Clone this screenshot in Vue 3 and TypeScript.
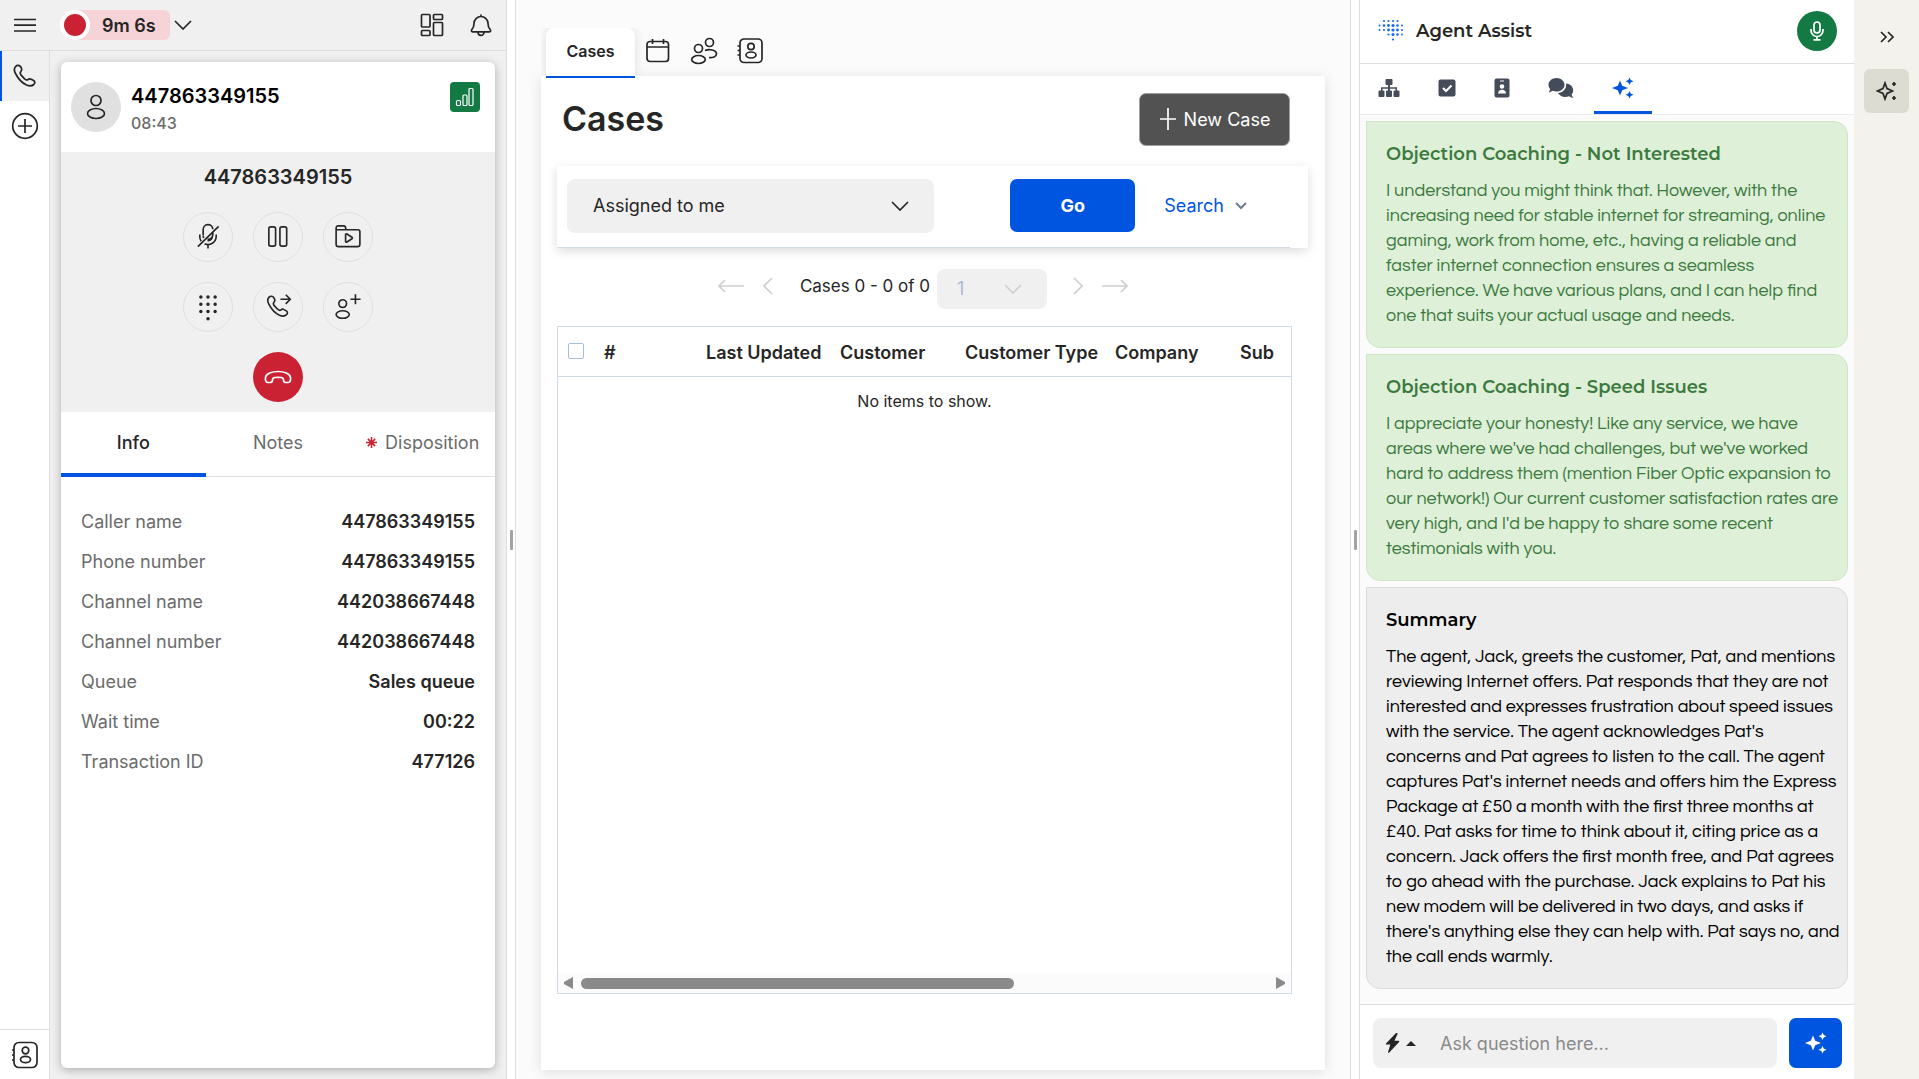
<script setup lang="ts">
import { ref } from 'vue'

interface Detail {
  label: string
  value: string
}

interface CallAction {
  name: string
  path: string
  filled?: boolean
}

interface AssistCard {
  title: string
  tone: 'coach' | 'summary'
  body: string
}

const details: Detail[] = [
  { label: 'Caller name', value: '447863349155' },
  { label: 'Phone number', value: '447863349155' },
  { label: 'Channel name', value: '442038667448' },
  { label: 'Channel number', value: '442038667448' },
  { label: 'Queue', value: 'Sales queue' },
  { label: 'Wait time', value: '00:22' },
  { label: 'Transaction ID', value: '477126' },
]

const handset =
  'M9.4 4.4C7.9 3 5.9 3.100 4.600 4.500C2.900 6.300 3 8.700 4.500 11.500C7 16.500 11 20.900 15.500 23C18.500 24.300 21 24.100 22.800 22.500C24.300 21.100 24 19.400 22.600 18.500L20.200 17.200C18.900 16.500 17.900 16.700 17 17.500C16 18.300 15 18 13.600 16.800L10.100 13.100C9 11.700 8.800 10.700 9.800 9.600C10.900 8.500 11 7.500 10.600 6.500Z'

const callActions: CallAction[] = [
  {
    name: 'Mute',
    path: 'M9 13V7a5 5 0 0 1 10-.5M19 9.500V12a5 5 0 0 1-5.500 5M5.500 12v2a8 8 0 0 0 1.500 5M22.500 12v2a8.500 8.500 0 0 1-12 7.500M18.500 14a4.500 4.500 0 0 1-5 4.200M9 13.500l.5 2M14 22v4.500M3.500 24.500L25 3.500',
  },
  {
    name: 'Hold',
    path: 'M6.500 4h3a2 2 0 0 1 2 2v16a2 2 0 0 1-2 2h-3a2 2 0 0 1-2-2V6a2 2 0 0 1 2-2zM18 4h3a2 2 0 0 1 2 2v16a2 2 0 0 1-2 2h-3a2 2 0 0 1-2-2V6a2 2 0 0 1 2-2z',
  },
  {
    name: 'Recordings',
    path: 'M1.700 6.500V5a2 2 0 0 1 2-2H9.500a2 2 0 0 1 2 2l.5 2.500M1.700 6.500V22a2.500 2.500 0 0 0 2.500 2.500h19.600a2.500 2.500 0 0 0 2.500-2.500V9a2 2 0 0 0-2-2H1.700zM11.500 12.200v6.600c0 .8.700 1.200 1.400.8l5.200-3.300c.6-.4.6-1.200 0-1.600l-5.200-3.300c-.7-.4-1.400 0-1.400.8z',
  },
  {
    name: 'Keypad',
    filled: true,
    path: 'M4.800 4.200a1.800 1.800 0 1 0 3.600 0a1.800 1.800 0 1 0-3.600 0M12.200 4.200a1.800 1.800 0 1 0 3.600 0a1.800 1.800 0 1 0-3.600 0M19.600 4.200a1.800 1.800 0 1 0 3.600 0a1.800 1.800 0 1 0-3.600 0M4.800 11.700a1.800 1.800 0 1 0 3.600 0a1.800 1.800 0 1 0-3.600 0M12.200 11.700a1.800 1.800 0 1 0 3.600 0a1.800 1.800 0 1 0-3.600 0M19.600 11.700a1.800 1.800 0 1 0 3.600 0a1.800 1.800 0 1 0-3.600 0M4.800 19.200a1.800 1.800 0 1 0 3.600 0a1.800 1.800 0 1 0-3.600 0M12.200 19.200a1.800 1.800 0 1 0 3.600 0a1.800 1.800 0 1 0-3.600 0M19.600 19.200a1.800 1.800 0 1 0 3.600 0a1.800 1.800 0 1 0-3.600 0M12.200 26.700a1.800 1.800 0 1 0 3.600 0a1.800 1.800 0 1 0-3.600 0',
  },
  { name: 'Transfer', path: handset + 'M16.500 6.500H26.500M22 1.800l4.700 4.700L22 11.200' },
  {
    name: 'Add participant',
    path: 'M12.500 11a4 4 0 1 1-8 0a4 4 0 1 1 8 0zM15.300 22.300a6.800 3.900 0 1 1-13.600 0a6.800 3.900 0 1 1 13.600 0zM16.500 6.500h10.500M21.700 1.200v10.500',
  },
]

const columns = ['#', 'Last Updated', 'Customer', 'Customer Type', 'Company', 'Sub']

const cards: AssistCard[] = [
  {
    title: 'Objection Coaching - Not Interested',
    tone: 'coach',
    body: 'I understand you might think that. However, with the\nincreasing need for stable internet for streaming, online\ngaming, work from home, etc., having a reliable and\nfaster internet connection ensures a seamless\nexperience. We have various plans, and I can help find\none that suits your actual usage and needs.',
  },
  {
    title: 'Objection Coaching - Speed Issues',
    tone: 'coach',
    body: "I appreciate your honesty! Like any service, we have\nareas where we've had challenges, but we've worked\nhard to address them (mention Fiber Optic expansion to\nour network!) Our current customer satisfaction rates are\nvery high, and I'd be happy to share some recent\ntestimonials with you.",
  },
  {
    title: 'Summary',
    tone: 'summary',
    body: "The agent, Jack, greets the customer, Pat, and mentions\nreviewing Internet offers. Pat responds that they are not\ninterested and expresses frustration about speed issues\nwith the service. The agent acknowledges Pat's\nconcerns and Pat agrees to listen to the call. The agent\ncaptures Pat's internet needs and offers him the Express\nPackage at £50 a month with the first three months at\n£40. Pat asks for time to think about it, citing price as a\nconcern. Jack offers the first month free, and Pat agrees\nto go ahead with the purchase. Jack explains to Pat his\nnew modem will be delivered in two days, and asks if\nthere's anything else they can help with. Pat says no, and\nthe call ends warmly.",
  },
]

// Dotted brand mark: x, y and radius of each dot.
const dots: number[][] = [
  [6, 2, 1.1], [10.500, 2, 1.1], [15, 2, 1.1], [19.500, 2, 1.1],
  [1.500, 6.500, 1], [6, 6.500, 1.3], [10.500, 6.500, 1.4], [15, 6.500, 1.6], [19.500, 6.500, 1.3], [24, 6.500, 1],
  [1.500, 11, 1], [6, 11, 1.1], [10.500, 11, 1.4], [15, 11, 1.6], [19.500, 11, 1.4], [24, 11, 1],
  [10.500, 15.500, 1.1], [15, 15.500, 1.5], [19.500, 15.500, 1.3], [24, 15.500, 0.9],
  [15, 20.500, 1.1],
]

const callTab = ref('Info')
const question = ref('')
</script>

<template>
  <div class="desktop">
    <section class="interactions">
      <header class="status-bar">
        <button class="plain menu" aria-label="Menu">
          <svg width="22" height="14" viewBox="0 0 22 14"><path d="M0 1.500h22M0 7.200h22M0 13h22" /></svg>
        </button>
        <button class="plain status" aria-label="Agent status">
          <span class="dot"></span>
          <span class="timer">9m 6s</span>
          <svg width="18" height="10" viewBox="0 0 18 10"><path d="M1 1l8 8l8-8" /></svg>
        </button>
        <button class="plain push" aria-label="Workspace layout">
          <svg width="24" height="24" viewBox="0 0 24 24">
            <rect x="1.500" y="1.500" width="8.500" height="12.500" rx="1" /><rect x="1.500" y="17.500" width="8.500" height="5" rx="1" />
            <rect x="13.500" y="1.500" width="9" height="5" rx="1" /><rect x="13.500" y="9.500" width="9" height="13" rx="1" />
          </svg>
        </button>
        <button class="plain bell" aria-label="Notifications">
          <svg width="22" height="24" viewBox="0 0 22 24">
            <path d="M11 3.500a7 7 0 0 1 7 7c0 3.500.7 4.600 2.200 6.200c.8.900.4 2.100-.7 2.100h-17c-1.100 0-1.500-1.200-.7-2.100C3.300 15.100 4 14 4 10.500a7 7 0 0 1 7-7zM11 3.500V1.500M8 19.200a3 3.200 0 0 0 6 0" />
          </svg>
        </button>
      </header>
      <div class="interaction-body">
        <nav class="side">
          <button class="plain side-tab current" aria-label="Calls">
            <svg width="28" height="28" viewBox="0 0 28 28"><path :d="handset" /></svg>
          </button>
          <button class="plain side-tab" aria-label="Add">
            <svg width="28" height="28" viewBox="0 0 28 28"><circle cx="14" cy="14" r="12.300" /><path d="M14 7v14M7 14h14" /></svg>
          </button>
          <button class="plain side-foot" aria-label="Contacts">
            <svg width="28" height="28" viewBox="0 0 28 28">
              <rect x="3" y="1.500" width="23" height="25" rx="5" /><circle cx="14.500" cy="9.500" r="3.300" /><ellipse cx="14.500" cy="18.500" rx="5" ry="3.200" /><path d="M1 9h2M1 14h2M1 19h2" />
            </svg>
          </button>
        </nav>
        <article class="call-card">
          <header class="caller">
            <span class="avatar">
              <svg width="22" height="26" viewBox="0 0 22 26"><circle cx="11" cy="6.500" r="5" /><ellipse cx="11" cy="19.500" rx="8.500" ry="5" /></svg>
            </span>
            <div class="caller-text">
              <strong>447863349155</strong>
              <span>08:43</span>
            </div>
            <span class="quality" aria-label="Connection quality">
              <svg width="20" height="20" viewBox="0 0 20 20"><rect x="1.500" y="13.500" width="4" height="5" rx="1" /><rect x="8" y="8" width="4" height="10.500" rx="1" /><rect x="14" y="1.500" width="4" height="17" rx="1" /></svg>
            </span>
          </header>
          <div class="controls">
            <h2>447863349155</h2>
            <div class="pads">
              <button v-for="a in callActions" :key="a.name" class="pad" :aria-label="a.name">
                <svg width="28" height="28" viewBox="0 0 28 29" :class="{ filled: a.filled }"><path :d="a.path" /></svg>
              </button>
            </div>
            <button class="hangup" aria-label="End call">
              <svg width="28" height="14" viewBox="0 0 28 14">
                <path d="M1.500 7.500C2 3.500 8 1.500 14 1.500S26 3.500 26.500 7.500C26.900 10.500 26 12.500 24 12.500H22C20.500 12.500 19.500 11.500 19.500 10C19.500 8.500 18.500 7.700 17 7.500C15 7.200 13 7.200 11 7.500C9.500 7.700 8.500 8.500 8.500 10C8.500 11.500 7.500 12.500 6 12.500H4C2 12.500 1.100 10.500 1.500 7.500Z" />
              </svg>
            </button>
          </div>
          <div class="tabs" role="tablist">
            <button v-for="t in ['Info', 'Notes', 'Disposition']" :key="t" role="tab" class="plain tab" :class="{ on: callTab === t }" @click="callTab = t">
              <svg v-if="t === 'Disposition'" class="required" width="11" height="11" viewBox="0 0 12 12"><path d="M6 0v12M0 6h12M2 2l8 8M10 2l-8 8" /></svg>
              {{ t }}
            </button>
          </div>
          <dl class="details">
            <div v-for="d in details" :key="d.label"><dt>{{ d.label }}</dt><dd>{{ d.value }}</dd></div>
          </dl>
        </article>
      </div>
    </section>

    <div class="splitter"><span></span></div>

    <main class="workspace">
      <nav class="page-tabs">
        <button class="plain page-tab">Cases</button>
        <button class="plain page-icon" aria-label="Calendar">
          <svg width="28" height="28" viewBox="0 0 28 28"><rect x="3" y="4.500" width="21.500" height="20" rx="3" /><path d="M3 10h21.500M8.500 2v5M19.500 2v5" /></svg>
        </button>
        <button class="plain page-icon" aria-label="Customers">
          <svg width="28" height="28" viewBox="0 0 28 28">
            <circle cx="8.500" cy="11.500" r="4" /><ellipse cx="8.500" cy="22.500" rx="6.800" ry="4" /><circle cx="19.500" cy="5.500" r="4" /><path d="M15 13.500c4-1.800 11.500-.6 11.500 3.200c0 3-4 4.300-7.500 3.900" />
          </svg>
        </button>
        <button class="plain page-icon" aria-label="Contacts">
          <svg width="28" height="28" viewBox="0 0 28 28">
            <rect x="4" y="2" width="22" height="23.500" rx="4" /><circle cx="15" cy="9.500" r="3.200" /><ellipse cx="15" cy="18" rx="5" ry="3" /><path d="M1.500 9h2.500M1.500 13.500h2.500M1.500 18h2.500" />
          </svg>
        </button>
      </nav>
      <section class="sheet">
        <div class="title-row">
          <h1>Cases</h1>
          <button class="new-case">
            <svg width="18" height="24" viewBox="0 0 18 24"><path d="M9 1v22M1 12h16" /></svg>
            New Case
          </button>
        </div>
        <form class="filter" @submit.prevent>
          <div class="pick wide">
            <select aria-label="Case filter"><option>Assigned to me</option></select>
            <svg width="18" height="10" viewBox="0 0 18 10"><path d="M1 1l8 8l8-8" /></svg>
          </div>
          <button type="submit" class="go">Go</button>
          <button type="button" class="plain search">
            Search
            <svg width="12" height="8" viewBox="0 0 12 8"><path d="M1 1l5 5l5-5" /></svg>
          </button>
        </form>
        <div class="pager">
          <button class="plain" aria-label="First page" disabled><svg width="27" height="14" viewBox="0 0 27 14"><path d="M26 7H1M7 1L1 7l6 6" /></svg></button>
          <button class="plain" aria-label="Previous page" disabled><svg width="10" height="18" viewBox="0 0 10 18"><path d="M9 1L1 9l8 8" /></svg></button>
          <span class="range">Cases 0 - 0 of 0</span>
          <div class="pick narrow">
            <select aria-label="Page" disabled><option>1</option></select>
            <svg width="18" height="10" viewBox="0 0 18 10"><path d="M1 1l8 8l8-8" /></svg>
          </div>
          <button class="plain" aria-label="Next page" disabled><svg width="10" height="18" viewBox="0 0 10 18"><path d="M1 1l8 8l-8 8" /></svg></button>
          <button class="plain" aria-label="Last page" disabled><svg width="27" height="14" viewBox="0 0 27 14"><path d="M1 7h25M20 1l6 6l-6 6" /></svg></button>
        </div>
        <div class="grid">
          <table>
            <colgroup><col class="c-check" /><col class="c-num" /><col class="c-date" /><col class="c-mid" /><col class="c-type" /><col class="c-mid" /><col /></colgroup>
            <thead>
              <tr>
                <th><input type="checkbox" aria-label="Select all" /></th>
                <th v-for="c in columns" :key="c">{{ c }}</th>
              </tr>
            </thead>
          </table>
          <p class="empty">No items to show.</p>
          <div class="scroll">
            <svg width="9" height="12" viewBox="0 0 9 12"><path d="M9 0v12L0 7V5z" /></svg>
            <div class="track"><span></span></div>
            <svg width="9" height="12" viewBox="0 0 9 12"><path d="M0 0v12l9-5V5z" /></svg>
          </div>
        </div>
      </section>
    </main>

    <div class="splitter"><span></span></div>

    <aside class="assist">
      <header class="assist-head">
        <svg class="brand" width="26" height="24" viewBox="0 0 26 24"><circle v-for="(d, i) in dots" :key="i" :cx="d[0]" :cy="d[1]" :r="d[2]" /></svg>
        <h2>Agent Assist</h2>
        <button class="mic" aria-label="Microphone">
          <svg width="14" height="20" viewBox="0 0 14 20"><rect x="4" y="1" width="6" height="11" rx="3" /><path d="M1 8v1.500a6 6 0 0 0 12 0V8M7 15.500v3M3.500 18.800h7" /></svg>
        </button>
      </header>
      <nav class="assist-tabs">
        <button class="plain" aria-label="Workflow">
          <svg width="22" height="18" viewBox="0 0 22 18"><path d="M8.500 0h5a1 1 0 0 1 1 1v4a1 1 0 0 1-1 1H12v2.200h7v3.300h1.500a1 1 0 0 1 1 1V17a1 1 0 0 1-1 1h-4a1 1 0 0 1-1-1v-4.500a1 1 0 0 1 1-1h1V9.700H12v1.800h1a1 1 0 0 1 1 1V17a1 1 0 0 1-1 1H9a1 1 0 0 1-1-1v-4.500a1 1 0 0 1 1-1h1V9.700H4.500v1.800h1a1 1 0 0 1 1 1V17a1 1 0 0 1-1 1h-4a1 1 0 0 1-1-1v-4.500a1 1 0 0 1 1-1H3V8.200h7V6H8.500a1 1 0 0 1-1-1V1a1 1 0 0 1 1-1z" /></svg>
        </button>
        <button class="plain" aria-label="Checklist">
          <svg width="18" height="18" viewBox="0 0 18 18"><rect x=".5" y=".5" width="17" height="17" rx="2" /><path class="cut" d="M5 9l3 3l5.500-5.500" /></svg>
        </button>
        <button class="plain" aria-label="Contact card">
          <svg width="16" height="20" viewBox="0 0 16 20"><rect x=".5" y=".5" width="15" height="19" rx="2" /><path class="cut thin" d="M6 3h4" /><circle class="hole" cx="8" cy="8.500" r="2.300" /><path class="hole" d="M4 15.500c0-5 8-5 8 0z" /></svg>
        </button>
        <button class="plain" aria-label="Conversation">
          <svg width="26" height="22" viewBox="0 0 26 22"><path d="M8.500 1c4.400 0 8 2.900 8 6.700s-3.600 6.800-8 6.800c-1.400 0-2.700-.3-3.800-.8C3.600 14.500 2 15.200.5 15.200c1-1 1.500-2 1.600-3.200C1 10.800.5 9.400.5 7.700C.5 3.900 4.100 1 8.500 1z" /><path d="M17.900 6.500c4 .2 7.300 3.100 7.300 6.700c0 1.600-.6 3-1.600 4.200c.2 1.200.8 2.300 1.900 3.300c-1.700 0-3.300-.7-4.400-1.500c-1.200.5-2.500.8-3.900.8c-3.300 0-6-1.500-7.300-3.900c4.700-.4 8.300-3.900 8.300-8.400z" /></svg>
        </button>
        <button class="plain on" aria-label="Suggestions">
          <svg width="22" height="22" viewBox="0 0 22 22"><path d="M8 3.500l2.200 5.300l5.800 2.200l-5.800 2.200l-2.200 5.300l-2.200-5.300L0 11l5.800-2.200zM17.500.5l1.200 2.500l2.800 1.200l-2.800 1.200l-1.200 2.500l-1.200-2.500l-2.800-1.200l2.800-1.200zM17.500 14l1.200 2.500l2.800 1.200l-2.800 1.200l-1.200 2.500l-1.200-2.500l-2.800-1.200l2.800-1.200z" /></svg>
        </button>
      </nav>
      <div class="feed">
        <article v-for="c in cards" :key="c.title" class="note" :class="c.tone">
          <h3>{{ c.title }}</h3>
          <p>{{ c.body }}</p>
        </article>
      </div>
      <form class="ask" @submit.prevent>
        <div class="ask-box">
          <button type="button" class="plain quick" aria-label="Quick actions">
            <svg width="15" height="20" viewBox="0 0 14 20"><path d="M10.500 0L.5 10.500c-.4.500-.1 1 .5 1h3.800L2.600 19c-.3.900.6 1.200 1.200.6L13.600 9c.4-.5.100-1.200-.6-1.200H9L12 1c.3-.8-.8-1.600-1.500-1z" /></svg>
            <svg width="10" height="5" viewBox="0 0 10 5"><path d="M5 0l5 5H0z" /></svg>
          </button>
          <input v-model="question" type="text" placeholder="Ask question here..." aria-label="Ask question" />
        </div>
        <button type="submit" class="send" aria-label="Ask">
          <svg width="22" height="22" viewBox="0 0 22 22"><path d="M8 3.500l2.200 5.300l5.800 2.200l-5.800 2.200l-2.200 5.300l-2.200-5.300L0 11l5.800-2.200zM17.500.5l1.200 2.500l2.800 1.200l-2.800 1.200l-1.200 2.500l-1.200-2.500l-2.800-1.200l2.800-1.200zM17.500 14l1.200 2.500l2.800 1.200l-2.800 1.200l-1.200 2.500l-1.200-2.500l-2.800-1.200l2.800-1.200z" /></svg>
        </button>
      </form>
    </aside>

    <nav class="rail">
      <button class="plain" aria-label="Collapse panel">
        <svg width="14" height="12" viewBox="0 0 14 12"><path d="M1 1l5 5l-5 5M8 1l5 5l-5 5" /></svg>
      </button>
      <button class="plain picked" aria-label="Agent Assist">
        <svg width="22" height="20" viewBox="0 0 22 20"><path d="M9 2l2 5.500l5.500 2.500l-5.500 2.500l-2 5.500l-2-5.500l-5.500-2.500l5.500-2.500zM18 1v4M16 3h4M18 15v4M16 17h4" /></svg>
      </button>
    </nav>
  </div>
</template>

<style>
body {
  margin: 0;
  font-family: Inter, "Liberation Sans", sans-serif;
  font-size: 18px;
  color: #262626;
}
</style>

<style scoped>
* {
  box-sizing: border-box;
}
.desktop {
  display: grid;
  grid-template-columns: 507px 8px minmax(0, 1fr) 8px 495px 65px;
  min-height: 100vh;
  background: #fff;
}
button,
select,
input {
  font: inherit;
  color: inherit;
}
button {
  cursor: pointer;
}
.plain {
  padding: 0;
  border: 0;
  background: none;
}
svg {
  display: block;
  flex: none;
  fill: none;
  stroke: #262626;
  stroke-width: 1.7;
}
h1,
h2,
h3,
p,
dl,
dd {
  margin: 0;
}

/* Interaction column */
.interactions {
  display: flex;
  flex-direction: column;
  background: #f0f0f0;
  border-right: 1px solid #dedede;
}
.status-bar {
  display: flex;
  align-items: center;
  height: 51px;
  padding: 0 14px;
  border-bottom: 1px solid #dedede;
}
.status {
  display: flex;
  align-items: center;
  margin-left: 24px;
}
.dot {
  width: 30px;
  height: 30px;
  border: 4px solid #fff;
  border-radius: 50%;
  background: #cb2233;
  z-index: 1;
}
.timer {
  height: 30px;
  margin: 0 4px 0 -15px;
  padding: 0 14px 0 27px;
  border-radius: 6px;
  background: #f6d3d7;
  font-weight: 600;
  line-height: 31px;
}
.push {
  margin-left: auto;
}
.bell {
  margin-left: 26px;
}
.interaction-body {
  display: flex;
  flex: 1;
}
.side {
  display: flex;
  flex-direction: column;
  width: 50px;
  background: #fff;
  border-right: 1px solid #dedede;
}
.side-tab {
  display: grid;
  place-items: center;
  height: 50px;
}
.side-tab.current {
  background: #f0f0f0;
  box-shadow: inset 2px 0 #0055e0;
}
.side-foot {
  display: grid;
  place-items: center;
  height: 50px;
  margin-top: auto;
  border-top: 1px solid #dedede;
}
.call-card {
  flex: 1;
  margin: 11px;
  border-radius: 6px;
  background: #fff;
  box-shadow: 0 2px 10px rgba(0, 0, 0, 0.28);
}
.caller {
  display: flex;
  height: 90px;
  padding: 20px 15px 0 10px;
}
.avatar {
  display: grid;
  place-items: center;
  width: 50px;
  height: 50px;
  border-radius: 50%;
  background: #e0e0e0;
}
.caller-text {
  display: flex;
  flex-direction: column;
  margin: 2px auto 0 10px;
}
.caller-text strong {
  color: #000;
  font-size: 20px;
  font-weight: 600;
  line-height: 24px;
}
.caller-text span {
  color: #6b6b6b;
  font-size: 16px;
  font-weight: 500;
  line-height: 30px;
}
.quality {
  display: grid;
  place-items: center;
  width: 30px;
  height: 30px;
  border-radius: 4px;
  background: #147a44;
}
.quality svg {
  stroke: #fff;
  stroke-width: 1.2;
}
.controls {
  display: flex;
  flex-direction: column;
  align-items: center;
  height: 260px;
  background: #f0f0f0;
}
.controls h2 {
  margin: 10px 0 20px;
  font-size: 20px;
  font-weight: 600;
  line-height: 30px;
}
.pads {
  display: grid;
  grid-template-columns: repeat(3, 50px);
  gap: 20px;
}
.pad {
  display: grid;
  place-items: center;
  height: 50px;
  padding: 0;
  border: 1px solid #dfdfdf;
  border-radius: 50%;
  background: none;
}
.pad .filled {
  fill: #262626;
  stroke: none;
}
.hangup {
  display: grid;
  place-items: center;
  width: 50px;
  height: 50px;
  margin-top: 20px;
  padding: 0;
  border: 0;
  border-radius: 50%;
  background: #cb2233;
}
.hangup svg {
  stroke: #fff;
}
.tabs {
  display: grid;
  grid-template-columns: repeat(3, 1fr);
  height: 65px;
  box-shadow: inset 0 -1px #dedede;
}
.tab {
  display: flex;
  align-items: center;
  justify-content: center;
  gap: 8px;
  border-bottom: 4px solid transparent;
  color: #6b6b6b;
}
.tab.on {
  border-color: #0055e0;
  color: #262626;
  font-weight: 500;
}
.required {
  stroke: #cb2233;
}
.details {
  padding: 25px 20px;
}
.details div {
  display: flex;
  justify-content: space-between;
  line-height: 40px;
}
.details dt {
  color: #6b6b6b;
}
.details dd {
  font-weight: 600;
}

.splitter {
  display: grid;
  place-items: center;
  background: #fff;
}
.splitter span {
  width: 3px;
  height: 20px;
  border-radius: 1px;
  background: #a3a3a3;
}

/* Workspace */
.workspace {
  display: flex;
  flex-direction: column;
  padding: 28px 25px 9px;
  background: #fbfbfb;
  border: solid #dedede;
  border-width: 0 1px;
}
.page-tabs {
  display: flex;
  align-items: center;
  height: 48px;
  padding-left: 5px;
  overflow: hidden;
}
.page-tab {
  z-index: 1;
  align-self: stretch;
  width: 89px;
  margin-right: 9px;
  padding-bottom: 2px;
  border-radius: 8px 8px 0 0;
  background: #fff;
  box-shadow: 0 0 12px rgba(0, 0, 0, 0.12);
  font-size: 16px;
  font-weight: 600;
}
.page-icon {
  margin-right: 18px;
  padding-bottom: 2px;
}
.sheet {
  display: flex;
  flex: 1;
  flex-direction: column;
  padding: 0 17px 76px 16px;
  background: linear-gradient(#0055e0, #0055e0) 5px 0 / 89px 2px no-repeat #fff;
  box-shadow: 0 2px 12px rgba(0, 0, 0, 0.12);
}
.title-row {
  display: flex;
  align-items: center;
  justify-content: space-between;
  height: 90px;
  padding: 0 18px 4px 5px;
}
h1 {
  padding-bottom: 2px;
  font-size: 34px;
  font-weight: 600;
}
.new-case {
  display: flex;
  align-items: center;
  justify-content: center;
  gap: 7px;
  width: 151px;
  height: 53px;
  border: 1px solid #a0a0a0;
  border-radius: 7px;
  background: #525252;
  color: #fff;
}
.new-case svg {
  stroke: #fff;
}
.filter {
  display: flex;
  align-items: center;
  height: 82px;
  padding: 0 61px 3px 10px;
  background: linear-gradient(#d3dbe6, #d3dbe6) 0 100% / calc(100% - 18px) 1px no-repeat #fff;
  box-shadow: 0 3px 10px rgba(0, 0, 0, 0.14);
}
.pick {
  display: grid;
  align-items: center;
}
.pick > * {
  grid-area: 1 / 1;
}
.pick svg {
  justify-self: end;
  margin-right: 25px;
  pointer-events: none;
}
.pick select {
  width: 100%;
  border: 0;
  border-radius: 8px;
  background: #f0f0f0;
  appearance: none;
}
.wide {
  width: 367px;
}
.wide select {
  height: 54px;
  padding: 0 26px;
}
.go {
  width: 125px;
  height: 53px;
  margin: 0 29px 0 auto;
  border: 0;
  border-radius: 7px;
  background: #0055e0;
  color: #fff;
  font-weight: 700;
}
.search {
  display: flex;
  align-items: center;
  gap: 11px;
  color: #0055e0;
}
.search svg {
  stroke: #6f7f90;
  stroke-width: 2;
}
.pager {
  display: flex;
  align-items: center;
  justify-content: center;
  height: 78px;
  padding: 0 19px 2px 0;
}
.pager svg {
  stroke: #cfcfcf;
}
.pager button {
  margin-right: 18px;
}
.pager button:last-child {
  margin-right: 0;
}
.range {
  margin: 0 7px 0 9px;
  font-size: 17px;
}
.narrow {
  width: 110px;
  margin: 5px 26px 0 0;
}
.narrow select {
  height: 40px;
  padding: 0 20px;
  color: #a9bcd8;
  opacity: 1;
}
.grid {
  display: flex;
  flex: 1;
  flex-direction: column;
  margin-right: 16px;
  border: 1px solid #d0dae6;
}
table {
  width: 100%;
  border-collapse: collapse;
  table-layout: fixed;
}
.c-check {
  width: 35px;
}
.c-num {
  width: 102px;
}
.c-date {
  width: 134px;
}
.c-mid {
  width: 125px;
}
.c-type {
  width: 150px;
}
th {
  height: 49px;
  padding: 2px 0 0 11px;
  border-bottom: 1px solid #d0dae6;
  font-weight: 600;
  text-align: left;
  white-space: nowrap;
}
th:first-child {
  padding: 0 0 0 10px;
}
th input {
  display: block;
  width: 16px;
  height: 16px;
  margin: 0;
  border: 1px solid #a9bcdc;
  border-radius: 2px;
  background: #fff;
  appearance: none;
}
.empty {
  padding: 14px 0;
  font-size: 16px;
  line-height: 20px;
  text-align: center;
}
.scroll {
  display: flex;
  align-items: center;
  gap: 8px;
  height: 20px;
  margin-top: auto;
  padding: 0 6px;
  background: #fbfbfb;
}
.scroll svg {
  fill: #8a8a8a;
  stroke: none;
}
.track {
  flex: 1;
}
.track span {
  display: block;
  width: 63%;
  height: 11px;
  border-radius: 6px;
  background: #8a8a8a;
}

/* Assist column */
.assist {
  display: flex;
  flex-direction: column;
  border-left: 1px solid #dedede;
  background: #fff;
}
.assist-head {
  display: flex;
  align-items: center;
  height: 64px;
  padding: 0 17px 2px 18px;
  border-bottom: 1px solid #dedede;
}
.assist-head h2 {
  margin-left: 12px;
  font-family: Montserrat, "Noto Sans", sans-serif;
  font-size: 18px;
  font-weight: 600;
}
.brand {
  fill: #1668f0;
  stroke: none;
}
.mic {
  display: grid;
  place-items: center;
  width: 40px;
  height: 40px;
  margin-left: auto;
  padding: 0;
  border: 0;
  border-radius: 50%;
  background: #147a44;
}
.mic svg {
  stroke: #fff;
}
.assist-tabs {
  display: flex;
  gap: 2px;
  height: 51px;
  border-bottom: 1px solid #ececec;
}
.assist-tabs button {
  display: grid;
  place-items: center;
  padding: 0 18px 2px;
}
.assist-tabs .on {
  box-shadow: inset 0 -3px #0055e0;
}
.assist-tabs svg {
  fill: #454c59;
  stroke: none;
}
.assist-tabs .on svg {
  fill: #0055e0;
}
.assist-tabs .cut {
  fill: none;
  stroke: #fff;
  stroke-width: 2;
}
.assist-tabs .thin {
  stroke-width: 1;
}
.assist-tabs .hole {
  fill: #fff;
}
.feed {
  display: flex;
  flex: 1;
  flex-direction: column;
  gap: 6px;
  padding: 6px 6px 13px;
  background: #fbfbfb;
}
.note {
  padding: 20px 19px 19px;
  border: 1px solid #cfe6c6;
  border-radius: 0 14px 14px 14px;
  background: #def0d8;
  color: #3d7a40;
}
.note.summary {
  border-color: #dcdcdc;
  background: #ededed;
  color: #000;
}
.note h3 {
  margin-bottom: 12px;
  font-family: Montserrat, "Noto Sans", sans-serif;
  font-size: 18px;
  font-weight: 600;
  line-height: 24px;
}
.note p {
  font-family: Questrial, Lato, sans-serif;
  font-size: 18px;
  line-height: 25px;
  white-space: pre;
}
.ask {
  display: flex;
  gap: 12px;
  height: 75px;
  padding: 13px 12px 0 13px;
  border-top: 1px solid #dedede;
}
.ask-box {
  display: flex;
  flex: 1;
  height: 50px;
  border-radius: 8px;
  background: #f0f0f0;
}
.quick {
  display: flex;
  align-items: center;
  gap: 6px;
  padding: 0 12px;
}
.quick svg {
  fill: #262626;
  stroke: none;
}
.ask-box input {
  flex: 1;
  min-width: 0;
  padding: 0 12px;
  border: 0;
  background: none;
}
.ask-box input::placeholder {
  color: #8a8a8a;
  opacity: 1;
}
.send {
  display: grid;
  place-items: center;
  width: 53px;
  height: 50px;
  padding: 0;
  border: 0;
  border-radius: 7px;
  background: #0055e0;
}
.send svg {
  fill: #fff;
  stroke: none;
}

/* Tool rail */
.rail {
  display: flex;
  flex-direction: column;
  align-items: center;
  gap: 10px;
  padding-top: 15px;
  background: #f3f2ed;
}
.rail button {
  display: grid;
  place-items: center;
  width: 45px;
  height: 44px;
  border-radius: 6px;
}
.rail .picked {
  background: #dddcd3;
}
</style>
